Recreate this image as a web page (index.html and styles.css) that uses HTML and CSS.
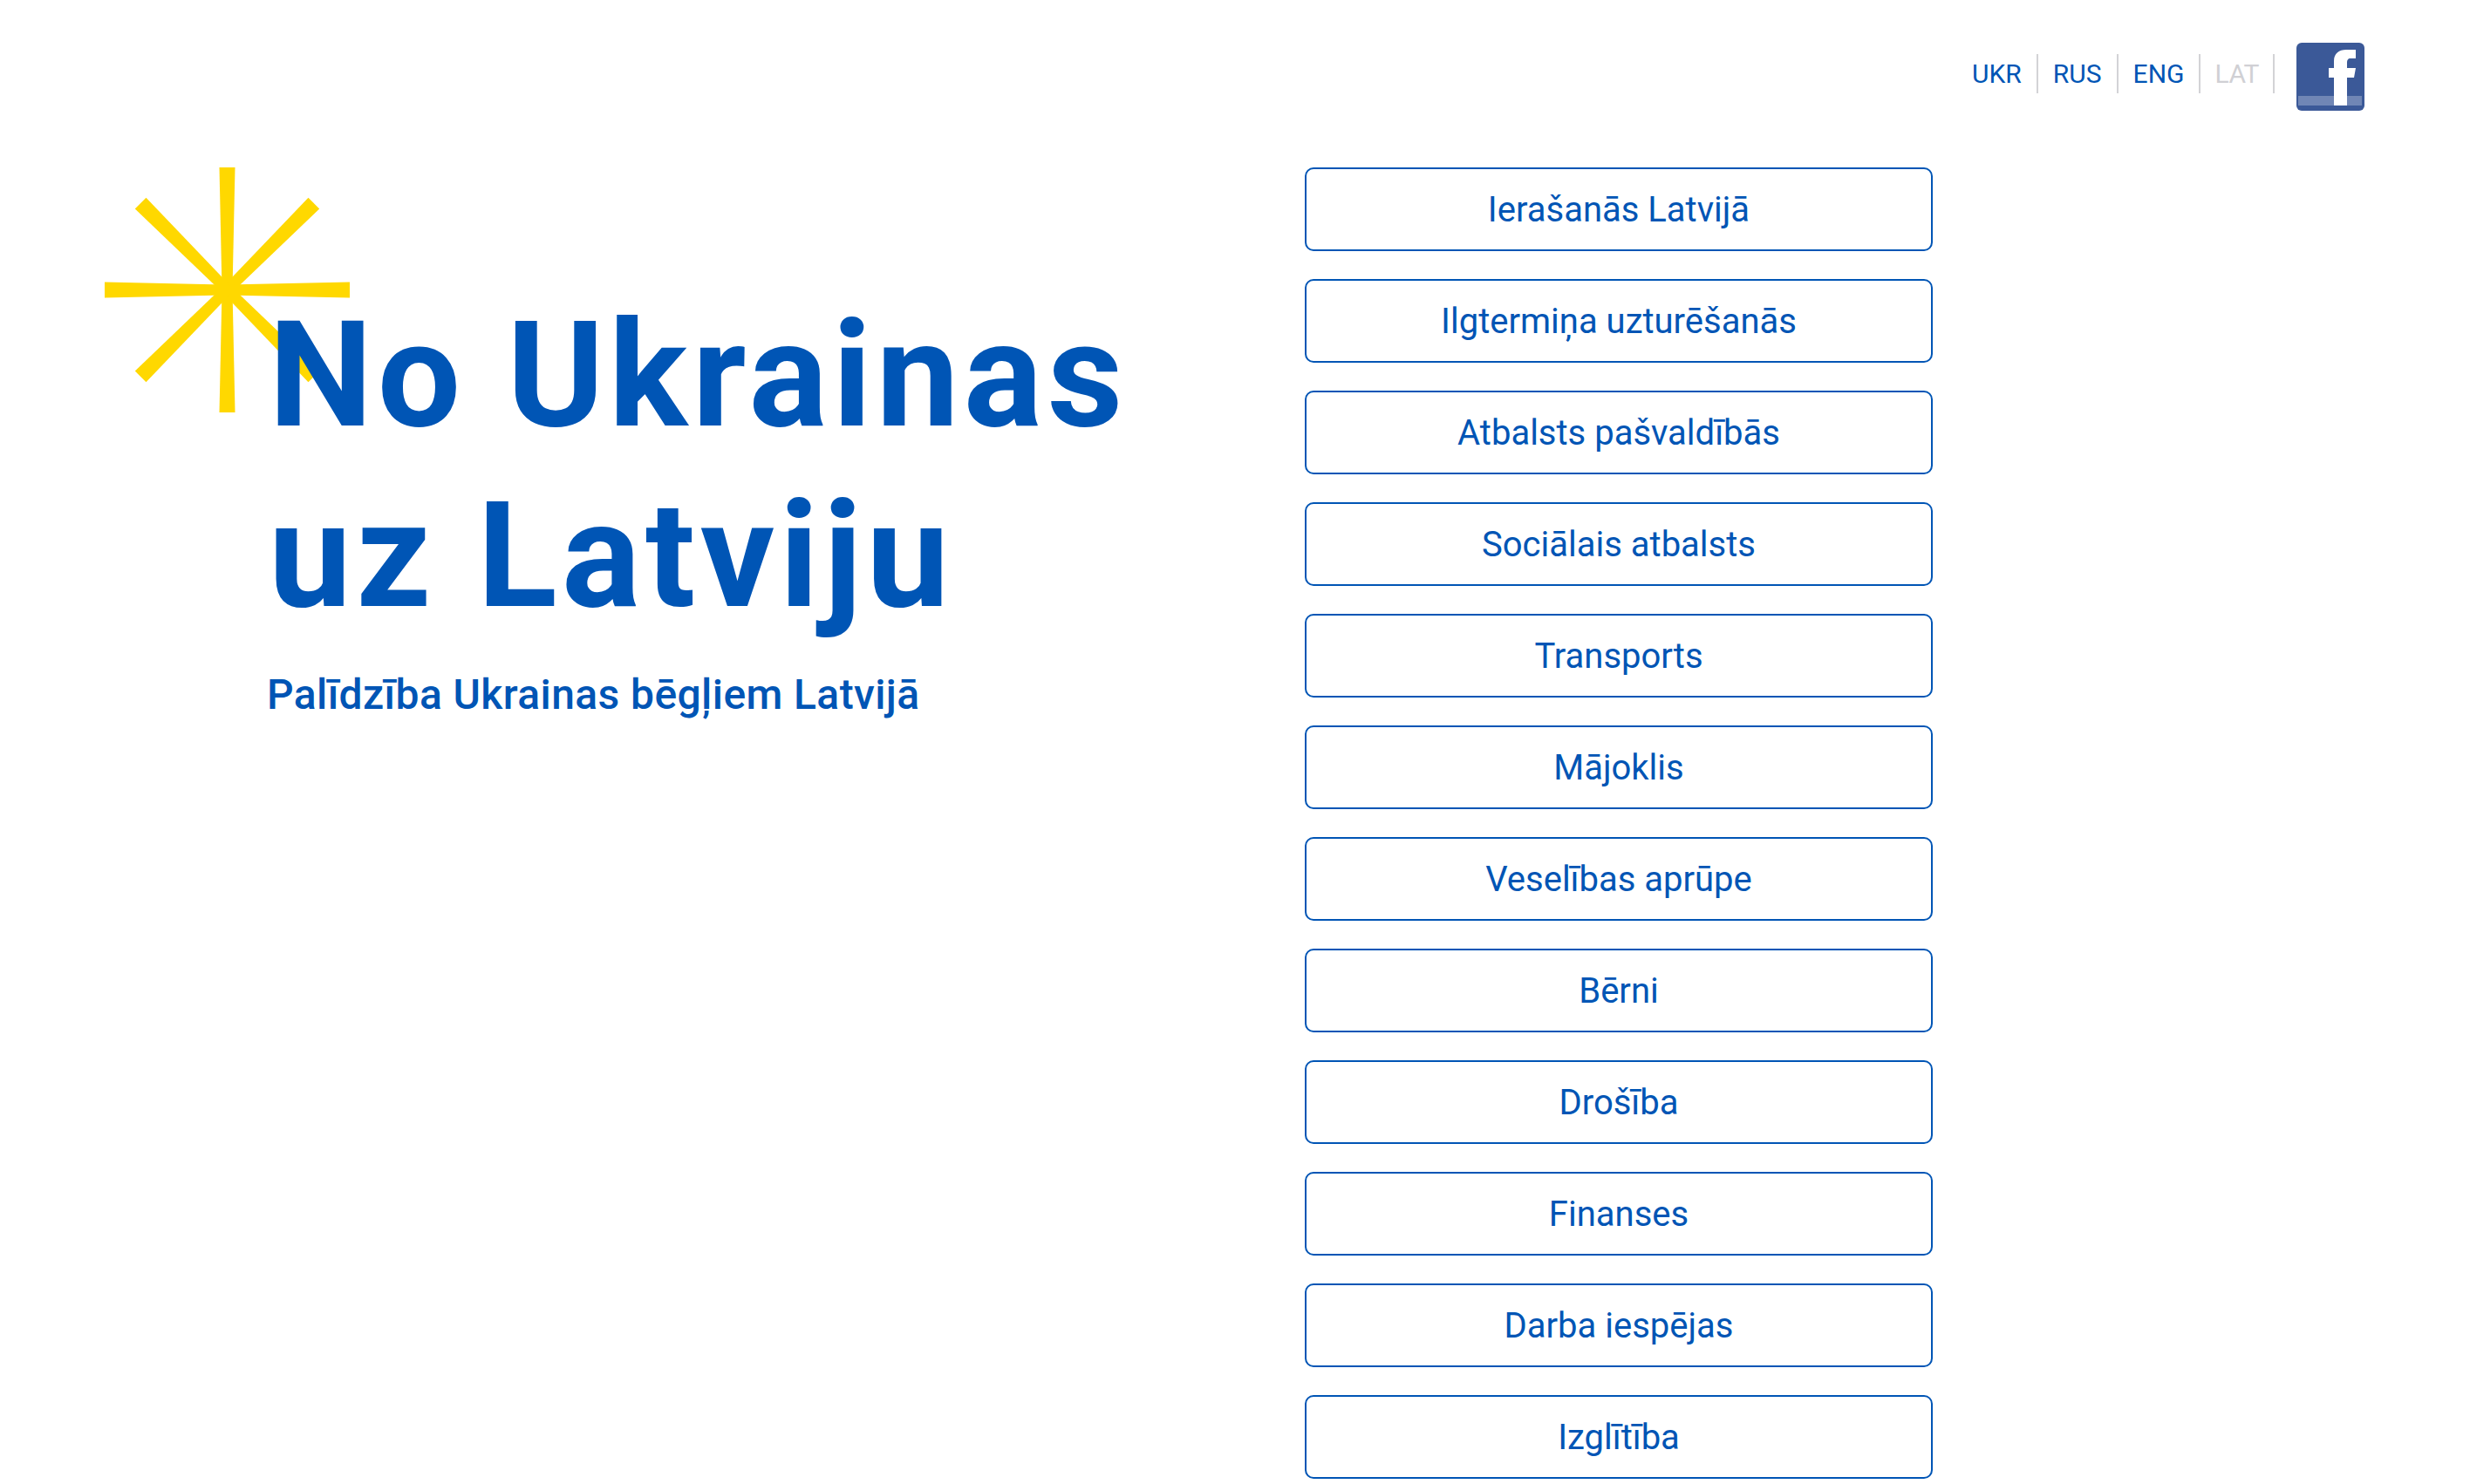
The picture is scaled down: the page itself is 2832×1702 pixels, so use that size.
FILE: index.html
```html
<!DOCTYPE html>
<html lang="lv">
<head>
    <meta charset="UTF-8">
    <meta name="viewport" content="width=device-width, initial-scale=1.0">
    <title>No Ukrainas uz Latviju</title>
    <link rel="stylesheet" href="styles.css">
</head>
<body>
    <header class="top-bar">
        <nav class="lang-list">
            <a class="lang-item" href="#">UKR</a>
            <a class="lang-item" href="#">RUS</a>
            <a class="lang-item" href="#">ENG</a>
            <a class="lang-item lang-current" href="#">LAT</a>
        </nav>
        <a class="fb-link" href="#" aria-label="Facebook">
            <svg class="fb-icon" viewBox="0 0 78 78" width="78" height="78">
                <rect width="78" height="78" rx="6" fill="#3b5998"/>
                <rect x="2" y="61" width="73" height="11" fill="#7086b5"/>
                <path d="M43 72V40H37V29H43V21C43 12 49 8 57 8H68V18H62C59 18 58 20 58 23V29H68L66 40H58V72Z" fill="#fff"/>
            </svg>
        </a>
    </header>

    <main class="content">
        <section class="intro">
            <!-- star sits behind the heading -->
            <svg class="star" viewBox="0 0 281 281" width="281" height="281">
                <g fill="#ffd800">
                    <path id="ray" d="M131.5 0H149.5L146.5 140.5H134.5Z"/>
                    <use href="#ray" transform="rotate(45 140.5 140.5)"/>
                    <use href="#ray" transform="rotate(90 140.5 140.5)"/>
                    <use href="#ray" transform="rotate(135 140.5 140.5)"/>
                    <use href="#ray" transform="rotate(180 140.5 140.5)"/>
                    <use href="#ray" transform="rotate(225 140.5 140.5)"/>
                    <use href="#ray" transform="rotate(270 140.5 140.5)"/>
                    <use href="#ray" transform="rotate(315 140.5 140.5)"/>
                </g>
            </svg>
            <h1 class="title">No Ukrainas<br>uz Latviju</h1>
            <p class="subtitle">Palīdzība Ukrainas bēgļiem Latvijā</p>
        </section>

        <ul class="menu">
            <li><a class="menu-btn" href="#">Ierašanās Latvijā</a></li>
            <li><a class="menu-btn" href="#">Ilgtermiņa uzturēšanās</a></li>
            <li><a class="menu-btn" href="#">Atbalsts pašvaldībās</a></li>
            <li><a class="menu-btn" href="#">Sociālais atbalsts</a></li>
            <li><a class="menu-btn" href="#">Transports</a></li>
            <li><a class="menu-btn" href="#">Mājoklis</a></li>
            <li><a class="menu-btn" href="#">Veselības aprūpe</a></li>
            <li><a class="menu-btn" href="#">Bērni</a></li>
            <li><a class="menu-btn" href="#">Drošība</a></li>
            <li><a class="menu-btn" href="#">Finanses</a></li>
            <li><a class="menu-btn" href="#">Darba iespējas</a></li>
            <li><a class="menu-btn" href="#">Izglītība</a></li>
        </ul>
    </main>
</body>
</html>
```

FILE: styles.css
```css
body {
    font-family: Roboto, "Noto Sans", sans-serif;
    background-color: #fff;
    color: #0055b5;
    margin: 0;
    padding: 0;
}

a {
    color: inherit;
    text-decoration: none;
}

.top-bar {
    display: flex;
    justify-content: flex-end;
    align-items: center;
    height: 78px;
    padding: 49px 121px 0 0;
}

.lang-list {
    display: flex;
    align-items: center;
    margin: -7px 25px 0 0;
}

.lang-item {
    font-size: 30px;
    line-height: 45px;
    padding: 0 17px;
    border-right: 2px solid #d3d3d6;
}

.lang-current {
    color: #d0d0d4;
    letter-spacing: -0.5px;
    padding: 0 16px;
}

.fb-link {
    display: block;
    height: 78px;
}

.fb-icon {
    display: block;
}

.content {
    display: flex;
    padding-top: 65px;
}

.intro {
    position: relative;
    box-sizing: border-box;
    width: 1496px;
    padding: 135px 0 0 306px;
}

.star {
    position: absolute;
    left: 120px;
    top: 0;
}

.title {
    position: relative;
    font-size: 169px;
    font-weight: 700;
    letter-spacing: 5.5px;
    line-height: 207px;
    margin: 0 0 0 2px;
}

.subtitle {
    font-size: 48px;
    font-weight: 500;
    letter-spacing: 0.4px;
    line-height: 64px;
    margin: 24px 0 0;
}

.menu {
    list-style: none;
    margin: 0;
    padding: 0;
    width: 720px;
    display: flex;
    flex-direction: column;
    gap: 32px;
}

.menu-btn {
    display: flex;
    justify-content: center;
    align-items: center;
    box-sizing: border-box;
    height: 96px;
    font-size: 40px;
    border: 2px solid #0055b5;
    border-radius: 10px;
}
```
